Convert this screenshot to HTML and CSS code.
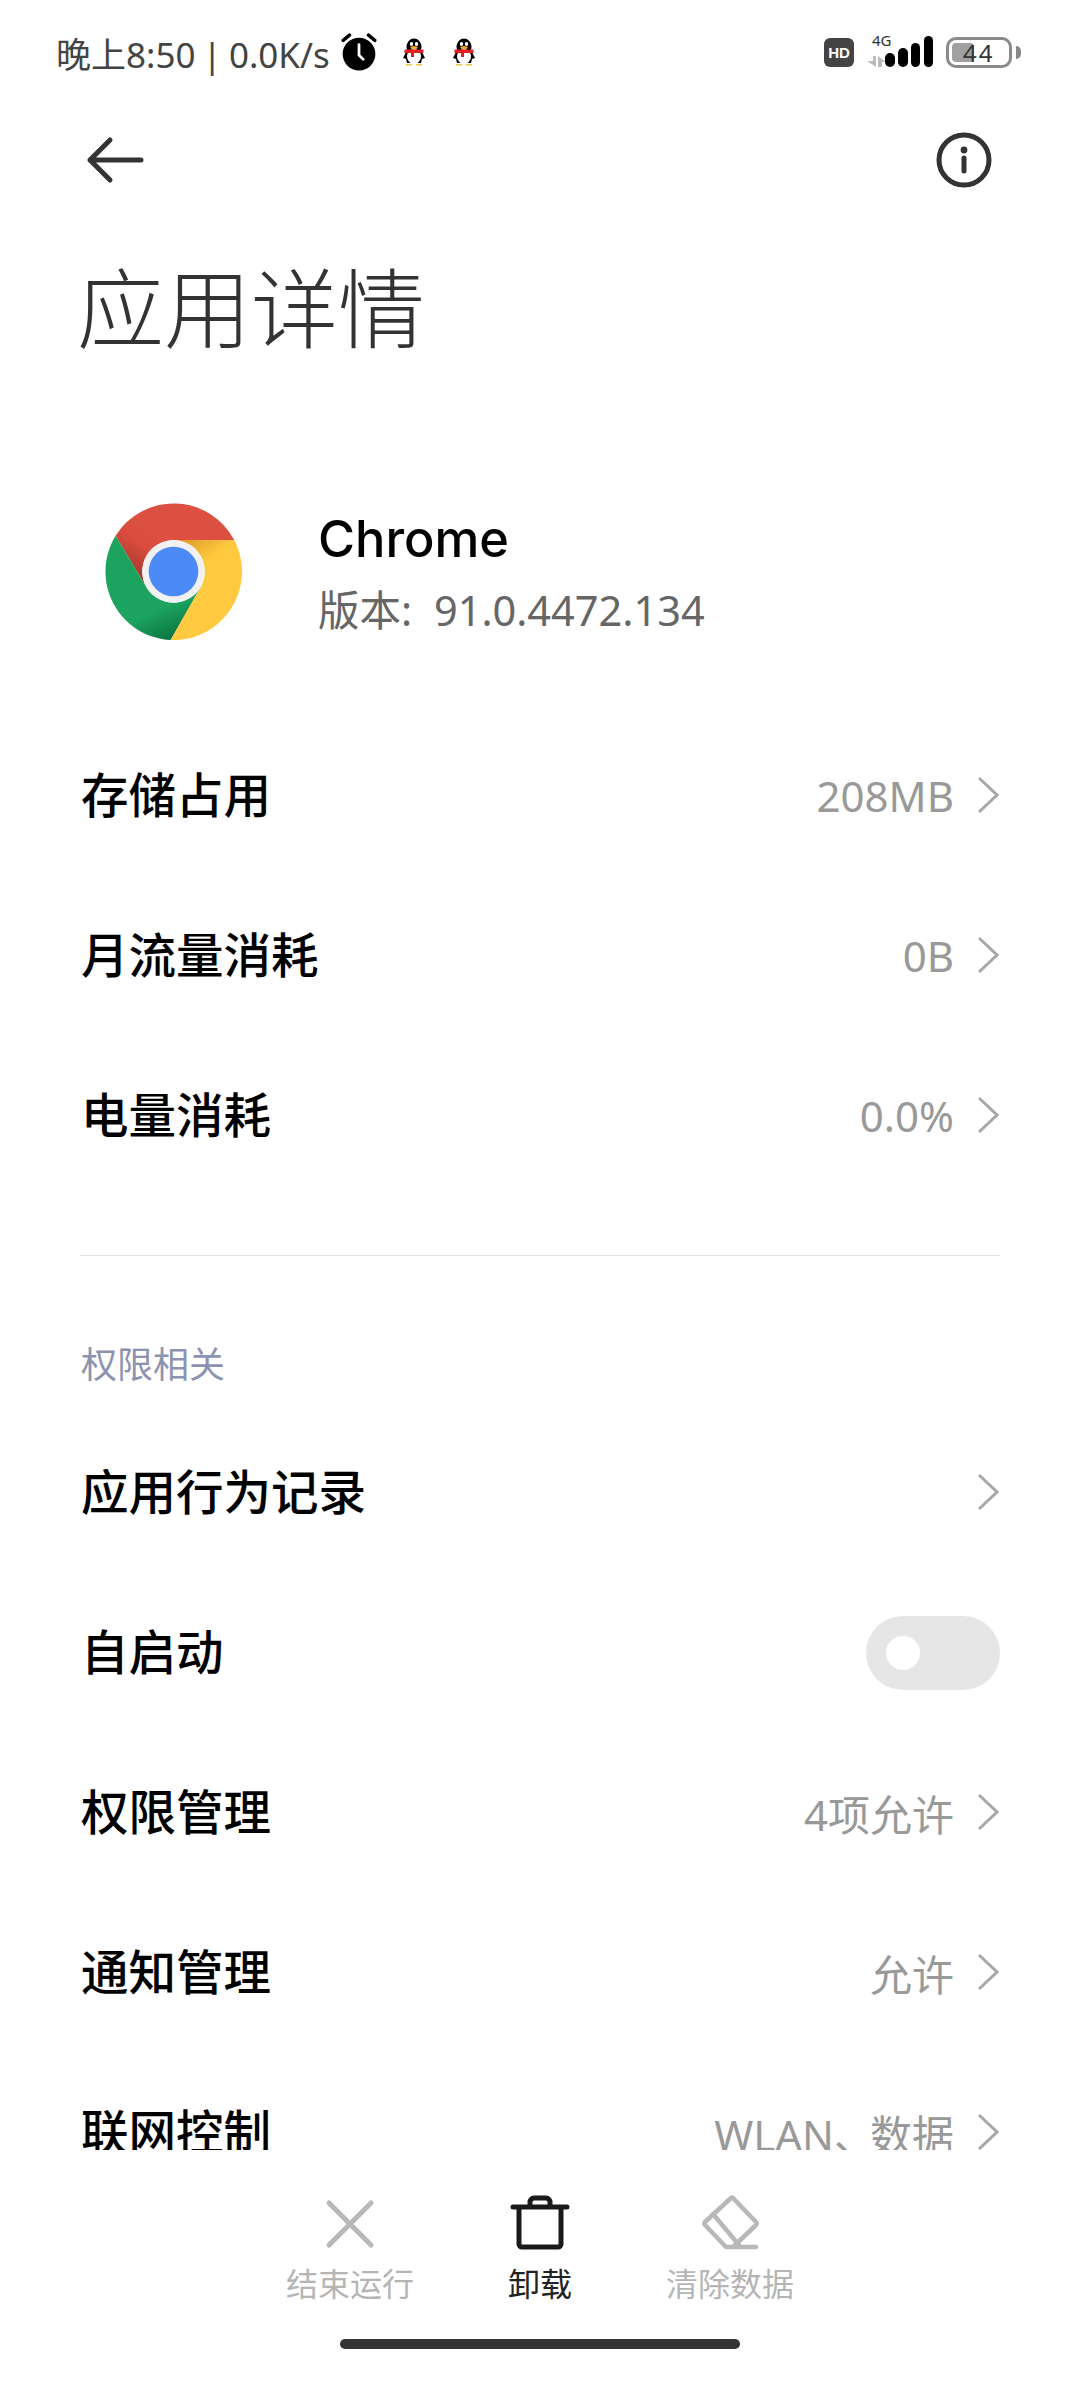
FILE: index.html
```html
<!DOCTYPE html>
<html lang="zh-CN">
<head>
<meta charset="utf-8">
<title>应用详情</title>
<link rel="stylesheet" href="styles.css">
</head>
<body>
<div class="page">
  <div class="statusbar">
    <div class="status-left">
      <span class="status-text">晚上8:50 | 0.0K/s</span>
      <svg class="ic-alarm" viewBox="0 0 36 36"><circle cx="18" cy="20" r="15.500" fill="#000"/><path d="M3 7l6-5M33 7l-6-5" stroke="#000" stroke-width="3.200" stroke-linecap="round"/><path d="M18 11v10l4 4" fill="none" stroke="#fff" stroke-width="2.600" stroke-linecap="round"/></svg>
      <svg class="ic-qq" viewBox="0 0 22 28"><use href="#qq"/></svg>
      <svg class="ic-qq" viewBox="0 0 22 28"><use href="#qq"/></svg>
    </div>
    <div class="status-right">
      <span class="hd">HD</span>
      <div class="signal">
        <span class="net">4G</span>
        <svg class="ic-signal" viewBox="0 0 70 34"><path d="M8 22h3v11L2 27h6zM13 33V22l8 6h-4v5z" fill="#bbb"/><rect x="20" y="19" width="10" height="14" rx="5"/><rect x="33" y="14" width="10" height="19" rx="5"/><rect x="46" y="9" width="9" height="24" rx="4.500"/><rect x="59" y="2" width="9" height="31" rx="4.500"/></svg>
      </div>
      <div class="battery"><span class="battery-fill"></span><span class="battery-num">44</span></div>
      <span class="battery-tip"></span>
    </div>
  </div>

  <svg class="defs" width="0" height="0">
    <defs>
      <g id="qq">
        <ellipse cx="11" cy="9" rx="7.500" ry="8.500" fill="#000"/>
        <path d="M0 20l3.500-7h15L22 20l-3 1-1 4H4l-1-4z" fill="#000"/>
        <ellipse cx="11" cy="18.500" rx="7" ry="7.500" fill="#fff"/>
        <ellipse cx="8.500" cy="6" rx="1.700" ry="2.100" fill="#fff"/><ellipse cx="13.500" cy="6" rx="1.700" ry="2.100" fill="#fff"/>
        <ellipse cx="11" cy="9.500" rx="3.600" ry="1.500" fill="#f5a623"/>
        <path d="M1.500 11.500h19v3.500H11v4H8v-4H1.500z" fill="#e02020"/>
        <path d="M3 26h6v1.500H3zM13 26h6v1.500h-6z" fill="#f5c242"/>
      </g>
    </defs>
  </svg>

  <div class="main">
    <div class="header">
      <svg class="ic-back" viewBox="0 0 60 60"><path d="M4 30h51M24 10L4 30l20 20" fill="none" stroke="#333" stroke-width="5" stroke-linecap="round" stroke-linejoin="round"/></svg>
      <svg class="ic-info" viewBox="0 0 56 56"><circle cx="28" cy="28" r="25" fill="none" stroke="#333" stroke-width="5"/><circle cx="28" cy="18" r="3.400" fill="#333"/><path d="M28 26v13" stroke="#333" stroke-width="5" stroke-linecap="round"/></svg>
    </div>
    <h1 class="title">应用详情</h1>

    <div class="app">
      <svg class="app-icon" viewBox="0 0 48 48">
        <defs>
          <linearGradient id="redShade" gradientUnits="userSpaceOnUse" x1="13" y1="26" x2="22" y2="12"><stop offset="0" stop-color="#a83a2c"/><stop offset="0.55" stop-color="#d94c3e"/><stop offset="1" stop-color="#dc5042"/></linearGradient>
          <linearGradient id="yellowShade" gradientUnits="userSpaceOnUse" x1="27" y1="13" x2="33" y2="22"><stop offset="0" stop-color="#e09a2a"/><stop offset="1" stop-color="#ffca3f"/></linearGradient>
          <linearGradient id="greenShade" gradientUnits="userSpaceOnUse" x1="24" y1="46" x2="20" y2="37"><stop offset="0" stop-color="#0e7a43"/><stop offset="1" stop-color="#1ba35f"/></linearGradient>
        </defs>
        <path d="M3.700 11.500A24 24 0 0 1 45.300 13H24A11 11 0 0 0 14.500 29.500Z" fill="url(#redShade)"/>
        <path d="M3.700 11.500L14.500 29.500A11 11 0 0 0 33.500 29.500L23 48A24 24 0 0 1 3.700 11.500Z" fill="url(#greenShade)"/>
        <path d="M45.300 13H24A11 11 0 0 1 33.500 29.500L23 48A24 24 0 0 0 45.300 13Z" fill="url(#yellowShade)"/>
        <circle cx="24" cy="24" r="10.900" fill="#f1f1f1"/>
        <circle cx="24" cy="24" r="8.700" fill="#4c8bf5"/>
      </svg>
      <div class="app-text">
        <div class="app-name">Chrome</div>
        <div class="app-version">版本: 91.0.4472.134</div>
      </div>
    </div>

    <div class="list first">
      <div class="row"><span class="label">存储占用</span><span class="value">208MB</span><svg class="chev" viewBox="0 0 22 38"><path d="M2 2l18 17L2 36"/></svg></div>
      <div class="row"><span class="label">月流量消耗</span><span class="value">0B</span><svg class="chev" viewBox="0 0 22 38"><path d="M2 2l18 17L2 36"/></svg></div>
      <div class="row"><span class="label">电量消耗</span><span class="value">0.0%</span><svg class="chev" viewBox="0 0 22 38"><path d="M2 2l18 17L2 36"/></svg></div>
    </div>

    <div class="divider"></div>
    <div class="section">权限相关</div>

    <div class="list">
      <div class="row"><span class="label">应用行为记录</span><svg class="chev" viewBox="0 0 22 38"><path d="M2 2l18 17L2 36"/></svg></div>
      <div class="row"><span class="label">自启动</span><span class="toggle"><span class="knob"></span></span></div>
      <div class="row"><span class="label">权限管理</span><span class="value">4项允许</span><svg class="chev" viewBox="0 0 22 38"><path d="M2 2l18 17L2 36"/></svg></div>
      <div class="row"><span class="label">通知管理</span><span class="value">允许</span><svg class="chev" viewBox="0 0 22 38"><path d="M2 2l18 17L2 36"/></svg></div>
      <div class="row"><span class="label">联网控制</span><span class="value">WLAN<span class="tight">、</span>数据</span><svg class="chev" viewBox="0 0 22 38"><path d="M2 2l18 17L2 36"/></svg></div>
    </div>
  </div>

  <div class="footer">
    <div class="actions">
      <div class="action muted">
        <svg class="ac-icon" viewBox="0 0 60 60"><path d="M9 9l42 42M51 9L9 51" fill="none" stroke="#b8b8b8" stroke-width="5" stroke-linecap="round"/></svg>
        <span>结束运行</span>
      </div>
      <div class="action">
        <svg class="ac-icon" viewBox="0 0 60 60"><path d="M3 13h54M9 13v37a3 3 0 0 0 3 3h36a3 3 0 0 0 3-3V13M20 13V8a4 4 0 0 1 4-4h12a4 4 0 0 1 4 4v5" fill="none" stroke="#1a1a1a" stroke-width="5" stroke-linecap="round" stroke-linejoin="round"/></svg>
        <span>卸载</span>
      </div>
      <div class="action muted">
        <svg class="ac-icon" viewBox="0 0 60 60"><path d="M33 4l23 24a2 2 0 0 1 0 3L33 53h-7L5 31a2 2 0 0 1 0-3L31 4a1.500 1.500 0 0 1 2 0zM13 20l26 31M26 53h30" fill="none" stroke="#b8b8b8" stroke-width="4.500" stroke-linecap="round" stroke-linejoin="round"/></svg>
        <span>清除数据</span>
      </div>
    </div>
    <div class="home"></div>
  </div>
</div>
</body>
</html>
```

FILE: styles.css
```css
* { box-sizing: border-box; }
html, body { margin: 0; padding: 0; background: #fff; }
body { font-family: "Noto Sans", "Noto Sans CJK SC", sans-serif; }
.page { width: 1080px; height: 2400px; display: flex; flex-direction: column; overflow: hidden; background: #fff; }
.defs { position: absolute; }

.statusbar { flex: none; height: 104px; display: flex; justify-content: space-between; align-items: center; padding: 0 59px 0 56px; }
.status-left { display: flex; align-items: center; }
.status-text { font-size: 35px; word-spacing: -2px; color: #444; white-space: nowrap; }
.ic-alarm { width: 38px; height: 38px; margin-left: 10px; }
.ic-qq { width: 22px; height: 28px; margin-left: 28px; }
.ic-alarm + .ic-qq { margin-left: 25px; }
.status-right { display: flex; align-items: center; }
.hd { width: 30px; height: 29px; border-radius: 6px; background: #444; color: #fff; font: 700 15px/29px "Liberation Sans", sans-serif; text-align: center; }
.signal { width: 70px; height: 36px; margin-left: 11px; position: relative; }
.net { position: absolute; left: 7px; top: -2px; font: 15px/16px "Noto Sans", sans-serif; color: #333; }
.ic-signal { position: absolute; left: 0; top: 0; width: 70px; height: 34px; }
.battery { width: 66px; height: 31px; margin-left: 11px; border: 3px solid #8a8a8a; border-radius: 10px; position: relative; }
.battery-fill { position: absolute; left: 3px; top: 3px; width: 22px; height: 19px; background: #a0a0a0; border-radius: 4px; }
.battery-num { position: absolute; left: 14px; top: -3px; font: 24px/31px "Noto Sans", sans-serif; letter-spacing: 2px; color: #333; }
.battery-tip { width: 5px; height: 13px; margin-left: 4px; background: #888; border-radius: 0 6px 6px 0; }

.main { flex: 1; min-height: 0; overflow: hidden; padding: 0 80px; }
.header { height: 112px; display: flex; justify-content: space-between; align-items: center; padding: 0 8px 0 6px; }
.ic-back { width: 60px; height: 60px; }
.ic-info { width: 56px; height: 56px; }
.title { margin: 28px 0 0 -3px; font-size: 87px; line-height: 120px; font-weight: 300; color: #333; font-family: "Noto Sans CJK SC", sans-serif; }

.app { margin-top: 138px; height: 138px; display: flex; align-items: center; padding-left: 25px; }
.app-icon { width: 137px; height: 137px; flex: none; }
.app-text { margin-left: 76px; display: flex; flex-direction: column; }
.app-name { font-family: "Inter", "Noto Sans", sans-serif; font-size: 50.500px; line-height: 79px; font-weight: 500; color: #000; }
.app-version { font-size: 41.500px; line-height: 65px; word-spacing: 11px; color: #666; white-space: nowrap; }

.list.first { margin-top: 76px; }
.row { height: 160px; display: flex; align-items: center; }
.label { flex: 1; padding: 0 0 8px 1px; font-size: 47.500px; font-weight: 500; color: #000; white-space: nowrap; }
.value { font-size: 42px; color: #999; margin-right: 23px; padding-bottom: 2px; white-space: nowrap; }
.tight { letter-spacing: -6px; }
.chev { width: 22px; height: 38px; margin: 0 1px 2px 0; }
.chev path { fill: none; stroke: #a8a8a8; stroke-width: 3; }

.divider { margin-top: 59px; height: 1px; background: #e0e0e0; }
.section { margin-top: 84px; height: 50px; padding-left: 1px; font-size: 36px; line-height: 50px; color: #8c93b0; }
.section + .list { margin-top: 23px; }

.toggle { width: 134px; height: 74px; border-radius: 37px; background: #e6e6e6; display: flex; align-items: center; padding-left: 20px; }
.knob { width: 34px; height: 34px; border-radius: 50%; background: #fff; }

.footer { flex: none; height: 250px; background: #fff; display: flex; flex-direction: column; align-items: center; }
.actions { display: flex; margin-top: 44px; }
.action { width: 190px; display: flex; flex-direction: column; align-items: center; font-size: 32px; color: #222; }
.action.muted { color: #b5b5b5; }
.ac-icon { width: 60px; height: 60px; }
.action span { margin-top: 7px; line-height: 46px; white-space: nowrap; }
.home { margin-top: 32px; width: 400px; height: 10px; border-radius: 5px; background: #333; }
```
